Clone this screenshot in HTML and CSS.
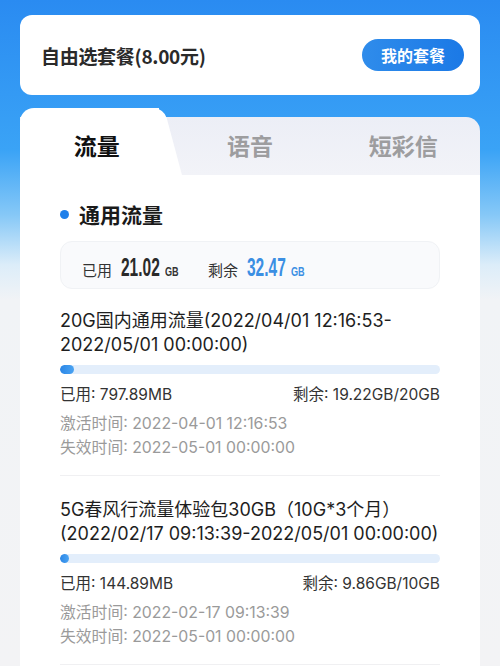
FILE: index.html
```html
<!DOCTYPE html>
<html lang="zh-CN">
<head>
<meta charset="utf-8">
<title>自由选套餐</title>
<link rel="stylesheet" href="styles.css">
</head>
<body>
<div class="page">
  <div class="plan-card">
    <div class="plan-name">自由选套餐(8.00元)</div>
    <div class="plan-btn">我的套餐</div>
  </div>

  <div class="usage-card">
    <div class="tabs">
      <div class="tab active"><span>流量</span></div>
      <div class="tab"><span>语音</span></div>
      <div class="tab"><span>短彩信</span></div>
    </div>
    <div class="usage-body">
      <div class="section-title"><i class="dot"></i>通用流量</div>
      <div class="summary">
        <span class="sum-label">已用</span>
        <span class="sum-num">21.02</span>
        <span class="sum-unit">GB</span>
        <span class="sum-label gap">剩余</span>
        <span class="sum-num blue">32.47</span>
        <span class="sum-unit blue">GB</span>
      </div>

      <div class="item">
        <div class="item-title">20G国内通用流量(2022/04/01 12:16:53-<br>2022/05/01 00:00:00)</div>
        <div class="bar"><div class="fill" style="width:14px"></div></div>
        <div class="row"><span>已用: 797.89MB</span><span>剩余: 19.22GB/20GB</span></div>
        <div class="meta">激活时间: 2022-04-01 12:16:53</div>
        <div class="meta">失效时间: 2022-05-01 00:00:00</div>
      </div>

      <div class="item">
        <div class="item-title">5G春风行流量体验包30GB（10G*3个月）<br>(2022/02/17 09:13:39-2022/05/01 00:00:00)</div>
        <div class="bar"><div class="fill" style="width:8px"></div></div>
        <div class="row"><span>已用: 144.89MB</span><span>剩余: 9.86GB/10GB</span></div>
        <div class="meta">激活时间: 2022-02-17 09:13:39</div>
        <div class="meta">失效时间: 2022-05-01 00:00:00</div>
      </div>
    </div>
  </div>
</div>
</body>
</html>
```

FILE: styles.css
```css
html, body {
  margin: 0;
  padding: 0;
}
body {
  width: 500px;
  height: 666px;
  overflow: hidden;
  font-family: "Noto Sans CJK SC", "Noto Sans", sans-serif;
  color: #222;
  background: linear-gradient(180deg, #2a8bf1 0px, #3aa3f6 150px, #86c8f7 215px, #dcedf9 265px, #f1f3f6 300px, #f3f3f5 666px);
}
.page {
  padding: 15px 20px 0;
}
.plan-card {
  height: 80px;
  background: #fff;
  border-radius: 12px;
  display: flex;
  align-items: center;
  justify-content: space-between;
  padding: 0 16px 0 21px;
  box-sizing: border-box;
}
.plan-name {
  font-size: 19px;
  font-weight: 700;
  color: #2a2a2a;
  letter-spacing: -0.3px;
}
.plan-btn {
  width: 102px;
  height: 32px;
  border-radius: 16px;
  background: linear-gradient(90deg, #2f8ceb, #1b79e6);
  color: #fff;
  font-size: 16px;
  font-weight: 700;
  display: flex;
  align-items: center;
  justify-content: center;
}
.usage-card {
  margin-top: 13px;
}
.tabs {
  position: relative;
  z-index: 0;
  height: 67px;
  display: grid;
  grid-template-columns: 1fr 1fr 1fr;
}
.tabs::before {
  content: "";
  position: absolute;
  z-index: -1;
  top: 9px;
  left: 0;
  right: 0;
  bottom: 0;
  border-radius: 0 14px 0 0;
  background: linear-gradient(180deg, #eceef6, #f2f3f8);
}
.tab {
  position: relative;
  display: flex;
  align-items: center;
  justify-content: center;
  padding-top: 7px;
  font-size: 23px;
  font-weight: 700;
  color: #9d9d9f;
}
.tab.active {
  z-index: 1;
  padding-top: 7px;
  color: #111;
}
.tab.active::before {
  content: "";
  position: absolute;
  z-index: -1;
  left: 0;
  top: 0;
  bottom: 0;
  right: 14px;
  background: #fff;
  border-radius: 14px 0 0 0;
}
.tab.active::after {
  content: "";
  position: absolute;
  z-index: -1;
  top: 0;
  bottom: 0;
  right: 0;
  width: 34px;
  background: #fff;
  transform: skewX(15deg);
  border-radius: 0 10px 0 0;
}
.usage-body {
  background: #fff;
  padding: 25px 40px 0;
  height: 520px;
}
.section-title {
  display: flex;
  align-items: center;
  font-size: 21px;
  font-weight: 700;
  color: #1a1a1a;
  height: 28px;
}
.dot {
  width: 9px;
  height: 9px;
  border-radius: 50%;
  background: #1f80ea;
  margin: 0 10px 0 0;
}
.summary {
  margin-top: 13px;
  height: 48px;
  box-sizing: border-box;
  border: 1px solid #f0f2f5;
  background: #f9fafc;
  border-radius: 12px;
  display: flex;
  align-items: baseline;
  padding: 11px 0 0 21px;
}
.sum-label {
  font-size: 15px;
  color: #333;
  margin-right: 9px;
}
.sum-label.gap {
  margin-left: 24px;
}
.sum-num {
  display: inline-block;
  font-family: "Liberation Sans", sans-serif;
  font-size: 25px;
  font-weight: 700;
  color: #2a2a2a;
  transform: scaleX(0.62);
  transform-origin: 0 50%;
  margin-right: -19px;
}
.sum-unit {
  display: inline-block;
  font-family: "Liberation Sans", sans-serif;
  font-size: 13px;
  font-weight: 700;
  color: #333;
  transform: scaleX(0.7);
  transform-origin: 0 50%;
}
.blue {
  color: #3b8fe3;
}
.item {
  padding: 20px 0 15px;
  border-bottom: 1px solid #f0f0f2;
}
.item + .item {
  padding-top: 22px;
}
.item-title {
  font-family: "Inter", "Noto Sans CJK SC", sans-serif;
  font-size: 18px;
  line-height: 24px;
  color: #1e1e1e;
}
.bar {
  margin-top: 8px;
  height: 9px;
  border-radius: 5px;
  background: #e3eefb;
  overflow: hidden;
}
.fill {
  height: 100%;
  min-width: 9px;
  border-radius: 5px;
  background: linear-gradient(90deg, #2b86e6, #4aa3f2);
}
.row {
  margin-top: 10px;
  display: flex;
  justify-content: space-between;
  font-family: "Inter", "Noto Sans CJK SC", sans-serif;
  font-size: 15.5px;
  line-height: 22px;
  color: #333;
}
.meta {
  font-family: "Inter", "Noto Sans CJK SC", sans-serif;
  font-size: 15.8px;
  line-height: 24px;
  color: #9a9a9a;
}
.row + .meta {
  margin-top: 6px;
}
```
